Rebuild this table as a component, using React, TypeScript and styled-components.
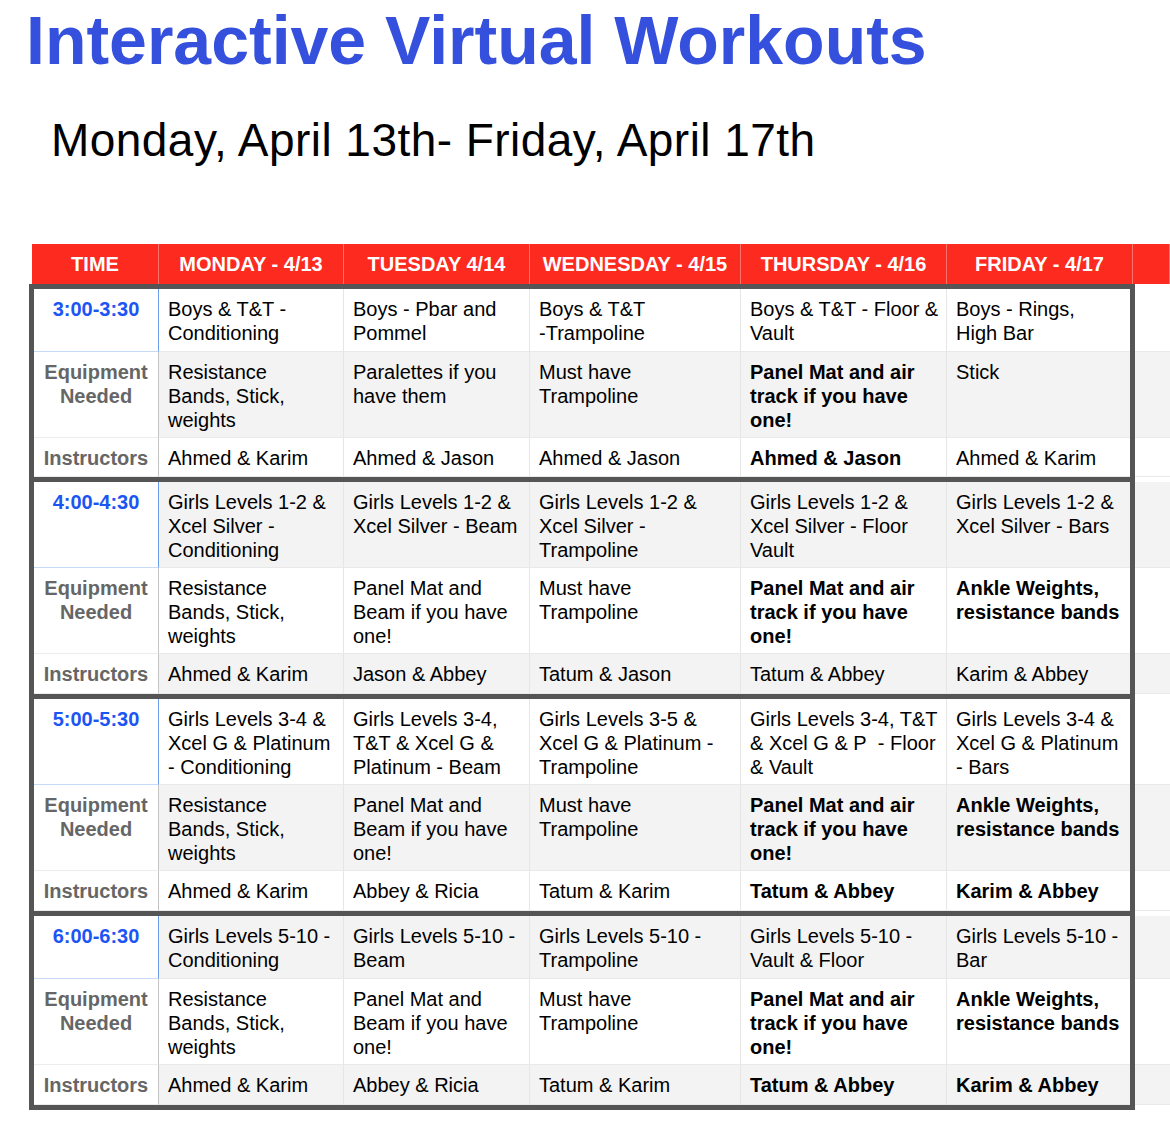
import styled, { createGlobalStyle } from "styled-components";

const GlobalStyle = createGlobalStyle`
  * {
    box-sizing: border-box;
  }
  body {
    margin: 0;
    background: #fff;
    font-family: "Liberation Sans", Arial, Helvetica, sans-serif;
  }
`;

const Page = styled.div`
  width: 1170px;
  overflow: hidden;
  padding: 6px 0 20px;
`;

const Title = styled.h1`
  margin: 0 0 0 26px;
  font-size: 68px;
  line-height: 68px;
  font-weight: 700;
  color: #3450dd;
  white-space: nowrap;
`;

const Subtitle = styled.h2`
  margin: 43px 0 0 51px;
  font-size: 46px;
  line-height: 46px;
  font-weight: 400;
  letter-spacing: 0.45px;
  color: #000;
  white-space: nowrap;
`;

const Table = styled.div`
  margin: 81px 0 0 32px;
  font-size: 20px;
  line-height: 24px;
`;

const HeaderRow = styled.div`
  display: grid;
  grid-template-columns: 127px 185px 186px 211px 206px 186px 1fr;
  height: 40px;
  background: #fd2a1f;
`;

const HeadCell = styled.div`
  display: flex;
  align-items: center;
  justify-content: center;
  color: #fff;
  font-weight: 700;
  white-space: nowrap;
  border-right: 1px solid rgba(255, 255, 255, 0.35);
`;

const Block = styled.div`
  display: flex;
`;

const Frame = styled.div<{ $last: boolean }>`
  flex: none;
  width: 1106px;
  margin-left: -3px;
  border: 5px solid #555;
  border-bottom-width: ${(p) => (p.$last ? 5 : 0)}px;
`;

const Row = styled.div<{ $h: number }>`
  display: grid;
  grid-template-columns: 125px 185px 186px 211px 206px 183px;
  height: ${(p) => p.$h}px;
`;

const TimeCell = styled.div<{ $time: boolean }>`
  background: #fff;
  text-align: center;
  font-weight: 700;
  padding-top: 8px;
  white-space: nowrap;
  color: ${(p) => (p.$time ? "#1b55f4" : "#666")};
  border-right: 1px solid ${(p) => (p.$time ? "#6d9eeb" : "#c4c4c4")};
  border-bottom: 1px solid ${(p) => (p.$time ? "#c9daf8" : "#ececec")};
`;

const DataCell = styled.div<{ $stripe: boolean; $bold: boolean }>`
  background: ${(p) => (p.$stripe ? "#f3f3f3" : "#fff")};
  color: #000;
  font-weight: ${(p) => (p.$bold ? 700 : 400)};
  padding: 8px 0 0 9px;
  white-space: nowrap;
  border-right: 1px solid #e6e6e6;
  border-bottom: 1px solid #e9e9e9;

  &:last-child {
    border-right: none;
  }
`;

const Spare = styled.div`
  flex: 1;
  padding-top: 5px;
  display: flex;
  flex-direction: column;
`;

const SpareCell = styled.div<{ $h: number; $stripe: boolean }>`
  height: ${(p) => p.$h}px;
  background: ${(p) => (p.$stripe ? "#f3f3f3" : "#fff")};
  border-bottom: 1px solid #e9e9e9;
`;

type Entry = { lines: string[]; bold?: boolean };
type Slot = {
  time: string;
  heights: [number, number, number];
  classes: Entry[];
  equipment: Entry[];
  instructors: Entry[];
};

const days = ["TIME", "MONDAY - 4/13", "TUESDAY 4/14", "WEDNESDAY - 4/15", "THURSDAY - 4/16", "FRIDAY - 4/17", ""];

const t = (...lines: string[]): Entry => ({ lines });
const b = (...lines: string[]): Entry => ({ lines, bold: true });

const panelMat = b("Panel Mat and air", "track if you have", "one!");
const girlsEquipment = [
  t("Resistance", "Bands, Stick,", "weights"),
  t("Panel Mat and", "Beam if you have", "one!"),
  t("Must have", "Trampoline"),
  panelMat,
  b("Ankle Weights,", "resistance bands"),
];

const slots: Slot[] = [
  {
    time: "3:00-3:30",
    heights: [63, 86, 39],
    classes: [
      t("Boys & T&T -", "Conditioning"),
      t("Boys - Pbar and", "Pommel"),
      t("Boys & T&T", "-Trampoline"),
      t("Boys & T&T - Floor &", "Vault"),
      t("Boys - Rings,", "High Bar"),
    ],
    equipment: [
      t("Resistance", "Bands, Stick,", "weights"),
      t("Paralettes if you", "have them"),
      t("Must have", "Trampoline"),
      panelMat,
      t("Stick"),
    ],
    instructors: [t("Ahmed & Karim"), t("Ahmed & Jason"), t("Ahmed & Jason"), b("Ahmed & Jason"), t("Ahmed & Karim")],
  },
  {
    time: "4:00-4:30",
    heights: [86, 86, 40],
    classes: [
      t("Girls Levels 1-2 &", "Xcel Silver -", "Conditioning"),
      t("Girls Levels 1-2 &", "Xcel Silver - Beam"),
      t("Girls Levels 1-2 &", "Xcel Silver -", "Trampoline"),
      t("Girls Levels 1-2 &", "Xcel Silver - Floor", "Vault"),
      t("Girls Levels 1-2 &", "Xcel Silver - Bars"),
    ],
    equipment: girlsEquipment,
    instructors: [t("Ahmed & Karim"), t("Jason & Abbey"), t("Tatum & Jason"), t("Tatum & Abbey"), t("Karim & Abbey")],
  },
  {
    time: "5:00-5:30",
    heights: [86, 86, 40],
    classes: [
      t("Girls Levels 3-4 &", "Xcel G & Platinum", "- Conditioning"),
      t("Girls Levels 3-4,", "T&T & Xcel G &", "Platinum - Beam"),
      t("Girls Levels 3-5 &", "Xcel G & Platinum -", "Trampoline"),
      t("Girls Levels 3-4, T&T", "& Xcel G & P  - Floor", "& Vault"),
      t("Girls Levels 3-4 &", "Xcel G & Platinum", "- Bars"),
    ],
    equipment: girlsEquipment,
    instructors: [t("Ahmed & Karim"), t("Abbey & Ricia"), t("Tatum & Karim"), b("Tatum & Abbey"), b("Karim & Abbey")],
  },
  {
    time: "6:00-6:30",
    heights: [63, 86, 40],
    classes: [
      t("Girls Levels 5-10 -", "Conditioning"),
      t("Girls Levels 5-10 -", "Beam"),
      t("Girls Levels 5-10 -", "Trampoline"),
      t("Girls Levels 5-10 -", "Vault & Floor"),
      t("Girls Levels 5-10 -", "Bar"),
    ],
    equipment: girlsEquipment,
    instructors: [t("Ahmed & Karim"), t("Abbey & Ricia"), t("Tatum & Karim"), b("Tatum & Abbey"), b("Karim & Abbey")],
  },
];

const Lines = ({ lines }: { lines: string[] }) => (
  <>
    {lines.map((line, i) => (
      <div key={i}>{line.replace(/  /g, "\u00a0 ")}</div>
    ))}
  </>
);

const App = () => {
  return (
    <Page>
      <GlobalStyle />
      <Title>Interactive Virtual Workouts</Title>
      <Subtitle>Monday, April 13th- Friday, April 17th</Subtitle>
      <Table>
        <HeaderRow>
          {days.map((d, i) => (
            <HeadCell key={i}>{d}</HeadCell>
          ))}
        </HeaderRow>
        {slots.map((slot, si) => {
          const rows = [
            { label: [slot.time], time: true, entries: slot.classes },
            { label: ["Equipment", "Needed"], time: false, entries: slot.equipment },
            { label: ["Instructors"], time: false, entries: slot.instructors },
          ];
          return (
            <Block key={slot.time}>
              <Frame $last={si === slots.length - 1}>
                {rows.map((row, ri) => {
                  const stripe = (si * 3 + ri) % 2 === 1;
                  return (
                    <Row key={ri} $h={slot.heights[ri]}>
                      <TimeCell $time={row.time}>
                        <Lines lines={row.label} />
                      </TimeCell>
                      {row.entries.map((e, ci) => (
                        <DataCell key={ci} $stripe={stripe} $bold={!!e.bold}>
                          <Lines lines={e.lines} />
                        </DataCell>
                      ))}
                    </Row>
                  );
                })}
              </Frame>
              <Spare>
                {slot.heights.map((h, ri) => (
                  <SpareCell key={ri} $h={h} $stripe={(si * 3 + ri) % 2 === 1} />
                ))}
              </Spare>
            </Block>
          );
        })}
      </Table>
    </Page>
  );
};

export default App;
